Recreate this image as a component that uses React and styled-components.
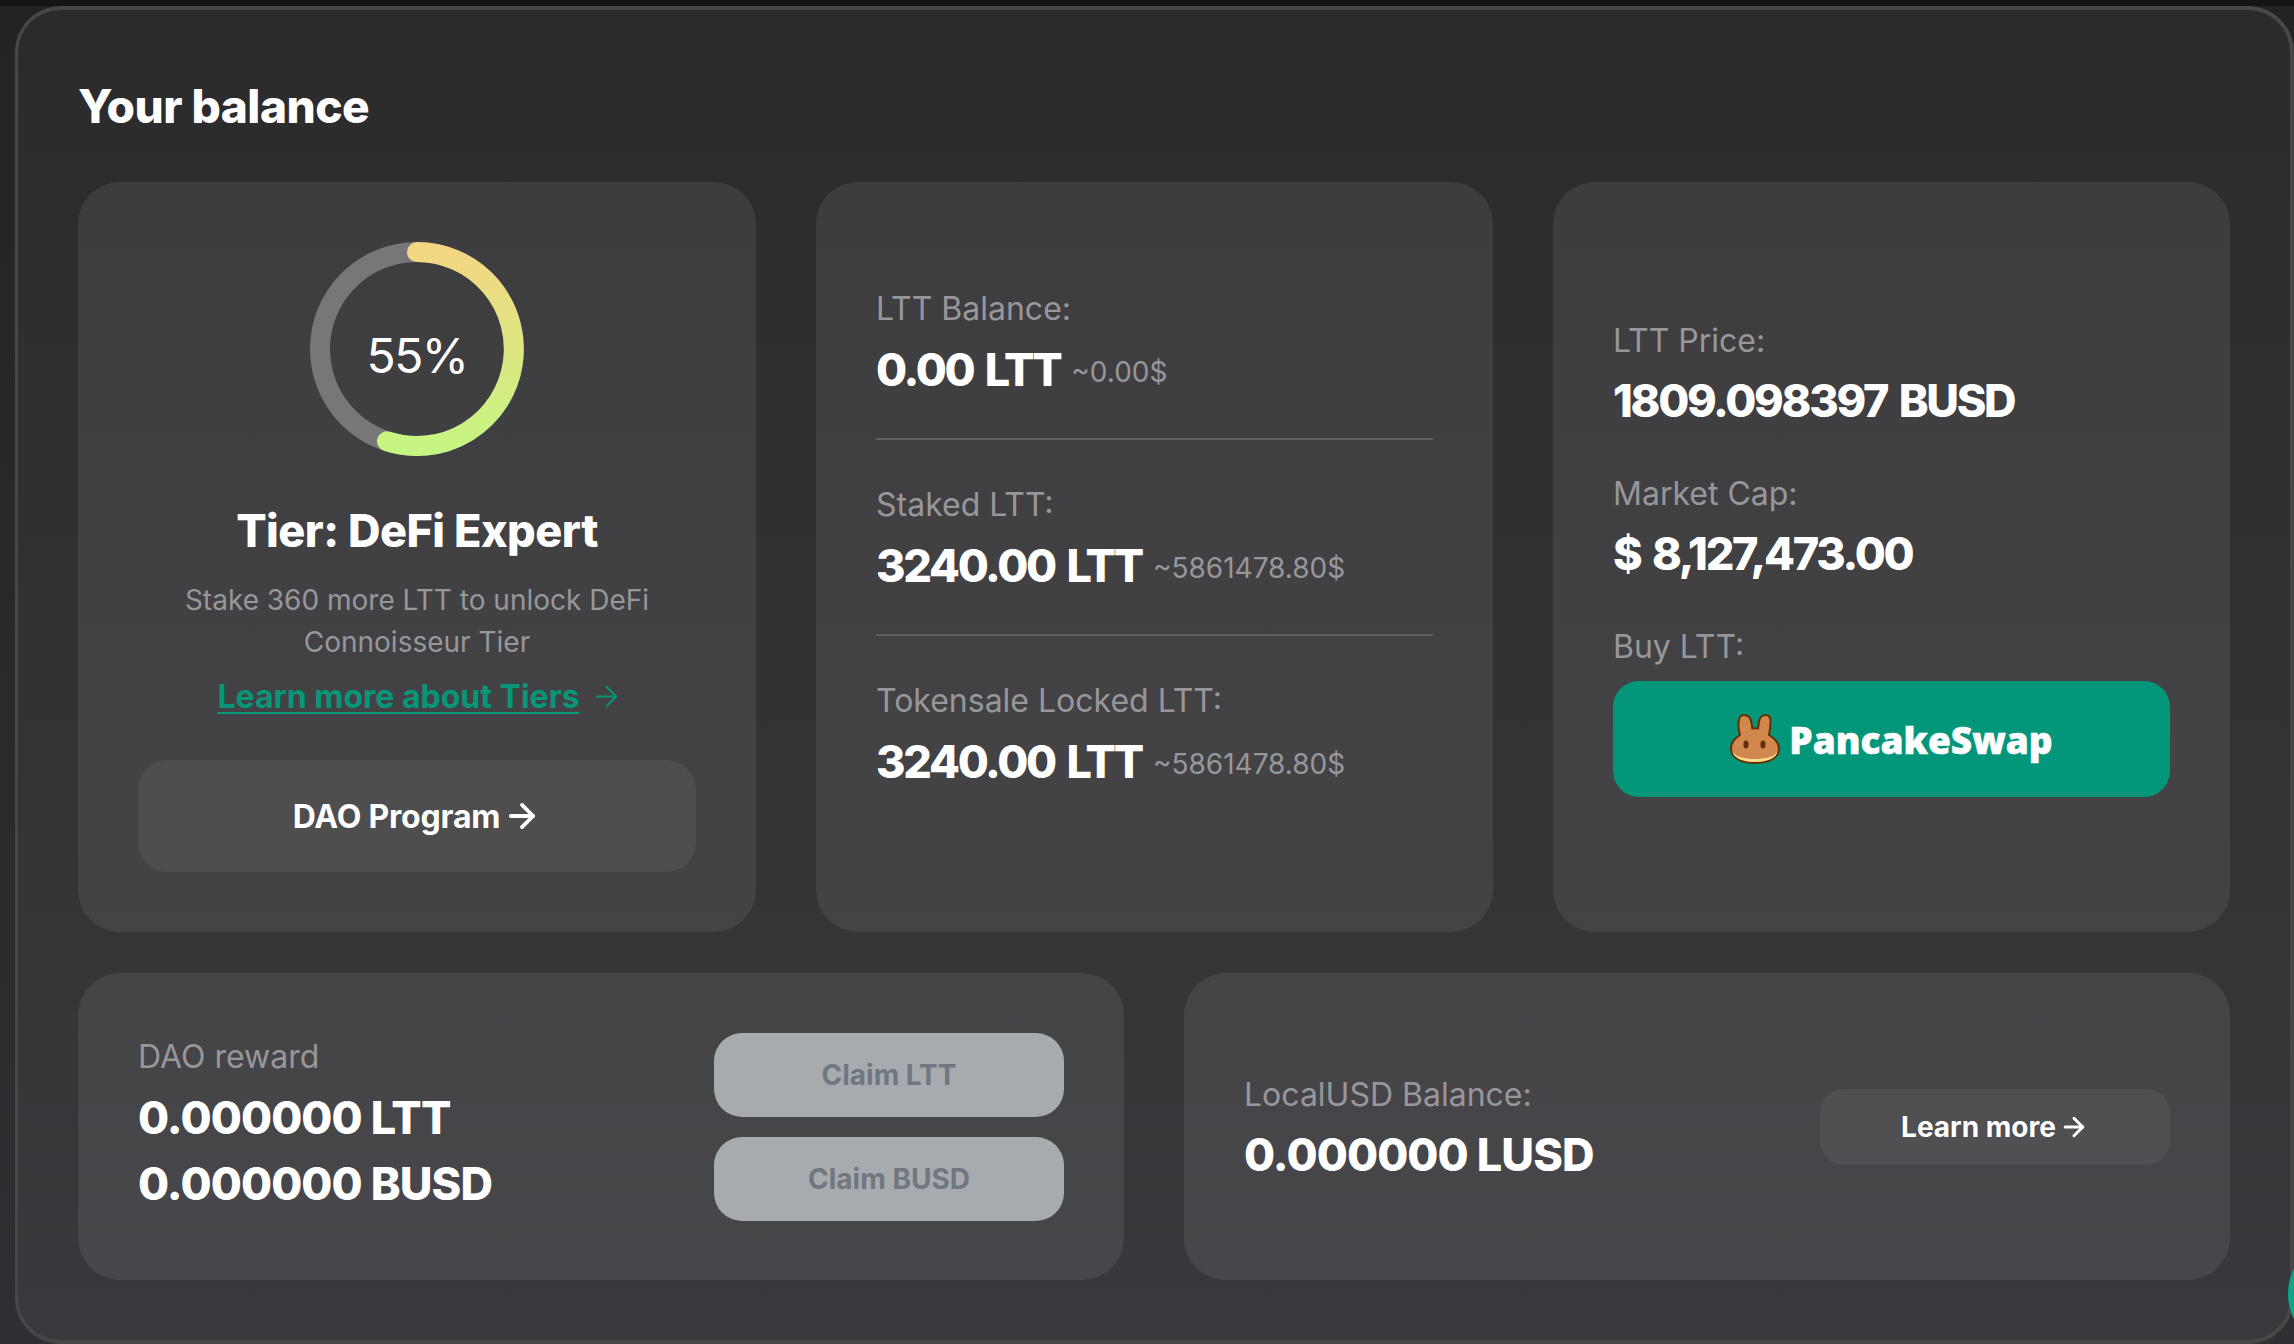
import React from 'react';
import styled, { createGlobalStyle } from 'styled-components';
import { ArrowRight } from 'lucide-react';

const GlobalStyle = createGlobalStyle`
  html, body {
    margin: 0;
    padding: 0;
    background: #232325;
  }
  * {
    box-sizing: border-box;
  }
`;

const Page = styled.div`
  position: relative;
  width: 2294px;
  height: 1344px;
  overflow: hidden;
  padding-left: 15px;
  border-top: 6px solid #151517;
  background: linear-gradient(180deg, #232325 0%, #302f33 100%);
  font-family: Inter, "Liberation Sans", sans-serif;
`;

const Panel = styled.section`
  width: 2279px;
  height: 1338px;
  padding: 60px;
  border: 4px solid #47474a;
  border-left-width: 3px;
  border-radius: 46px;
  background: linear-gradient(180deg, #2b2b2d 0%, #39383c 100%);
`;

const Title = styled.h1`
  margin: 0 0 40px;
  font: 800 46px/72px Inter, sans-serif;
  letter-spacing: -0.5px;
  color: #fff;
`;

const TopRow = styled.div`
  display: grid;
  grid-template-columns: repeat(3, 1fr);
  gap: 60px;
  height: 750px;
  margin-bottom: 41px;
`;

const BottomRow = styled.div`
  display: grid;
  grid-template-columns: repeat(2, 1fr);
  gap: 60px;
  height: 307px;
`;

const Card = styled.div`
  display: flex;
  flex-direction: column;
  padding: 0 60px;
  border-radius: 42px;
  background: rgba(255, 255, 255, 0.08);
`;

const TierCard = styled(Card)`
  align-items: center;
  padding-top: 60px;
`;

const CenterCard = styled(Card)`
  justify-content: center;
`;

const WideCard = styled(Card)`
  flex-direction: row;
  align-items: center;
  justify-content: space-between;
`;

const RingWrap = styled.div`
  position: relative;
  width: 214px;
  height: 214px;
`;

const RingText = styled.div`
  position: absolute;
  inset: 12px 0 0;
  display: flex;
  align-items: center;
  justify-content: center;
  font-size: 48px;
  font-weight: 400;
  letter-spacing: -1.5px;
  color: #fff;
`;

const TierTitle = styled.h2`
  margin: 47px 0 0;
  font: 800 45px/56px Inter, sans-serif;
  letter-spacing: -0.5px;
  color: #fff;
`;

const TierText = styled.p`
  margin: 20px 0 0;
  font-size: 28px;
  line-height: 42px;
  text-align: center;
  color: #97979a;
`;

const TierLink = styled.div`
  display: flex;
  align-items: center;
  gap: 10px;
  margin: 12px 0 0 6px;
  height: 42px;
  font-size: 32px;
  font-weight: 700;
  color: #079678;

  span {
    text-decoration: underline;
    text-decoration-thickness: 2px;
    text-underline-offset: 4px;
  }
`;

const DaoButton = styled.button`
  display: flex;
  align-items: center;
  justify-content: center;
  gap: 3px;
  width: 558px;
  height: 112px;
  margin-top: 43px;
  border: none;
  border-radius: 30px;
  background: rgba(255, 255, 255, 0.06);
  font: 700 32px Inter, sans-serif;
  letter-spacing: -0.2px;
  color: #fff;
`;

const Section = styled.div`
  padding: 41px 0 ${({ $last }) => ($last ? '72px' : '32px')};
  border-bottom: ${({ $last }) => ($last ? 'none' : '2px solid #5f5f62')};
`;

const Label = styled.div`
  font-size: 32px;
  line-height: 48px;
  color: #97979a;
`;

const ValueRow = styled.div`
  display: flex;
  align-items: center;
  gap: 11px;
  margin-top: 1px;
`;

const Value = styled.div`
  font: 800 45px/72px Inter, sans-serif;
  letter-spacing: -2.3px;
  word-spacing: 4px;
  color: #fff;
`;

const Approx = styled.span`
  margin-top: 3px;
  font-size: 28px;
  color: #97979a;
`;

const PriceBlock = styled.div`
  margin-bottom: 33px;
`;

const SwapButton = styled.button`
  display: flex;
  align-items: center;
  justify-content: center;
  gap: 9px;
  width: 100%;
  height: 116px;
  margin-top: 10px;
  border: none;
  border-radius: 26px;
  background: #03967b;
`;

const SwapName = styled.span`
  font: 800 37px "Open Sans", sans-serif;
  color: #fff;
  -webkit-text-stroke: 0.5px #fff;
`;

const RewardBlock = styled.div`
  padding-bottom: 4px;

  ${Label} {
    margin-bottom: 4px;
  }
`;

const LusdBlock = styled.div`
  padding-top: 8px;
`;

const WideValue = styled(Value)`
  letter-spacing: -0.9px;
  word-spacing: 0;
`;

const RewardValue = styled(WideValue)`
  line-height: 66px;
`;

const ClaimColumn = styled.div`
  display: flex;
  flex-direction: column;
  gap: 20px;
`;

const ClaimButton = styled.button`
  width: 350px;
  height: 84px;
  border: none;
  border-radius: 28px;
  background: #a8abad;
  font: 700 28px Inter, sans-serif;
  color: #707780;
`;

const LearnButton = styled.button`
  display: flex;
  align-items: center;
  justify-content: center;
  gap: 3px;
  width: 350px;
  height: 76px;
  border: none;
  border-radius: 24px;
  background: rgba(255, 255, 255, 0.06);
  font: 700 28px Inter, sans-serif;
  color: #fff;
`;

const ChatBubble = styled.div`
  position: absolute;
  left: 2288px;
  top: 1232px;
  width: 112px;
  height: 112px;
  border-radius: 50%;
  background: #0aa788;
`;

// progress ring, 55% clockwise from the top
const Ring = () => (
  <svg width="214" height="214" viewBox="0 0 214 214" fill="none">
    <defs>
      <linearGradient id="ringFill" x1="0" y1="0" x2="0" y2="214" gradientUnits="userSpaceOnUse">
        <stop offset="0" stopColor="#f6d582" />
        <stop offset="1" stopColor="#c4f782" />
      </linearGradient>
    </defs>
    <circle cx="107" cy="107" r="97" stroke="#77777a" strokeWidth="20" />
    <path
      d="M107 10 A97 97 0 1 1 77 199.3"
      stroke="url(#ringFill)"
      strokeWidth="20"
      strokeLinecap="round"
    />
  </svg>
);

const BunnyLogo = () => (
  <svg width="50" height="50" viewBox="0 0 50 50">
    <path
      d="M10 21 C8 14 8 8 9.500 4 C10.500 1.500 13 0.800 15.500 1.200 C19 1.800 21 5 21.500 9 L22.300 14.500 C24 14.300 26 14.300 28 14.500 L29 8 C29.500 4 32 1 35.500 1 C38.500 1 40.500 3.500 40.500 7.500 C40.500 12 39.800 17 39 21 C44.500 24.500 49 28.500 49 34.500 C49 44 38 49 25 49 C12 49 1 44 1 34.500 C1 28.500 5 24 10 21 Z"
      fill="#d1884f"
      stroke="#633001"
      strokeWidth="2"
    />
    <path
      d="M2.500 37 C5 43 14 45 25 45 C36 45 45 43 47.500 37 C47 44 37 48 25 48 C13 48 3 44 2.500 37 Z"
      fill="#fedc90"
    />
    <ellipse cx="16" cy="30.500" rx="2.600" ry="4" fill="#633001" />
    <ellipse cx="33" cy="30.500" rx="2.600" ry="4" fill="#633001" />
  </svg>
);

const App = () => {
  return (
    <Page>
      <GlobalStyle />
      <Panel>
        <Title>Your balance</Title>
        <TopRow>
          <TierCard>
            <RingWrap>
              <Ring />
              <RingText>55%</RingText>
            </RingWrap>
            <TierTitle>Tier: DeFi Expert</TierTitle>
            <TierText>
              Stake 360 more LTT to unlock DeFi
              <br />
              Connoisseur Tier
            </TierText>
            <TierLink>
              <span>Learn more about Tiers</span>
              <ArrowRight size={33} strokeWidth={1.5} />
            </TierLink>
            <DaoButton>
              DAO Program
              <ArrowRight size={38} strokeWidth={2.4} />
            </DaoButton>
          </TierCard>

          <CenterCard>
            <Section>
              <Label>LTT Balance:</Label>
              <ValueRow>
                <Value>0.00 LTT</Value>
                <Approx>~0.00$</Approx>
              </ValueRow>
            </Section>
            <Section>
              <Label>Staked LTT:</Label>
              <ValueRow>
                <Value>3240.00 LTT</Value>
                <Approx>~5861478.80$</Approx>
              </ValueRow>
            </Section>
            <Section $last>
              <Label>Tokensale Locked LTT:</Label>
              <ValueRow>
                <Value>3240.00 LTT</Value>
                <Approx>~5861478.80$</Approx>
              </ValueRow>
            </Section>
          </CenterCard>

          <CenterCard>
            <PriceBlock>
              <Label>LTT Price:</Label>
              <Value>1809.098397 BUSD</Value>
            </PriceBlock>
            <PriceBlock>
              <Label>Market Cap:</Label>
              <Value>$ 8,127,473.00</Value>
            </PriceBlock>
            <Label>Buy LTT:</Label>
            <SwapButton>
              <BunnyLogo />
              <SwapName>PancakeSwap</SwapName>
            </SwapButton>
          </CenterCard>
        </TopRow>

        <BottomRow>
          <WideCard>
            <RewardBlock>
              <Label>DAO reward</Label>
              <RewardValue>0.000000 LTT</RewardValue>
              <RewardValue>0.000000 BUSD</RewardValue>
            </RewardBlock>
            <ClaimColumn>
              <ClaimButton>Claim LTT</ClaimButton>
              <ClaimButton>Claim BUSD</ClaimButton>
            </ClaimColumn>
          </WideCard>
          <WideCard>
            <LusdBlock>
              <Label>LocalUSD Balance:</Label>
              <WideValue>0.000000 LUSD</WideValue>
            </LusdBlock>
            <LearnButton>
              Learn more
              <ArrowRight size={30} strokeWidth={2.4} />
            </LearnButton>
          </WideCard>
        </BottomRow>
      </Panel>
      <ChatBubble />
    </Page>
  );
};

export default App;
